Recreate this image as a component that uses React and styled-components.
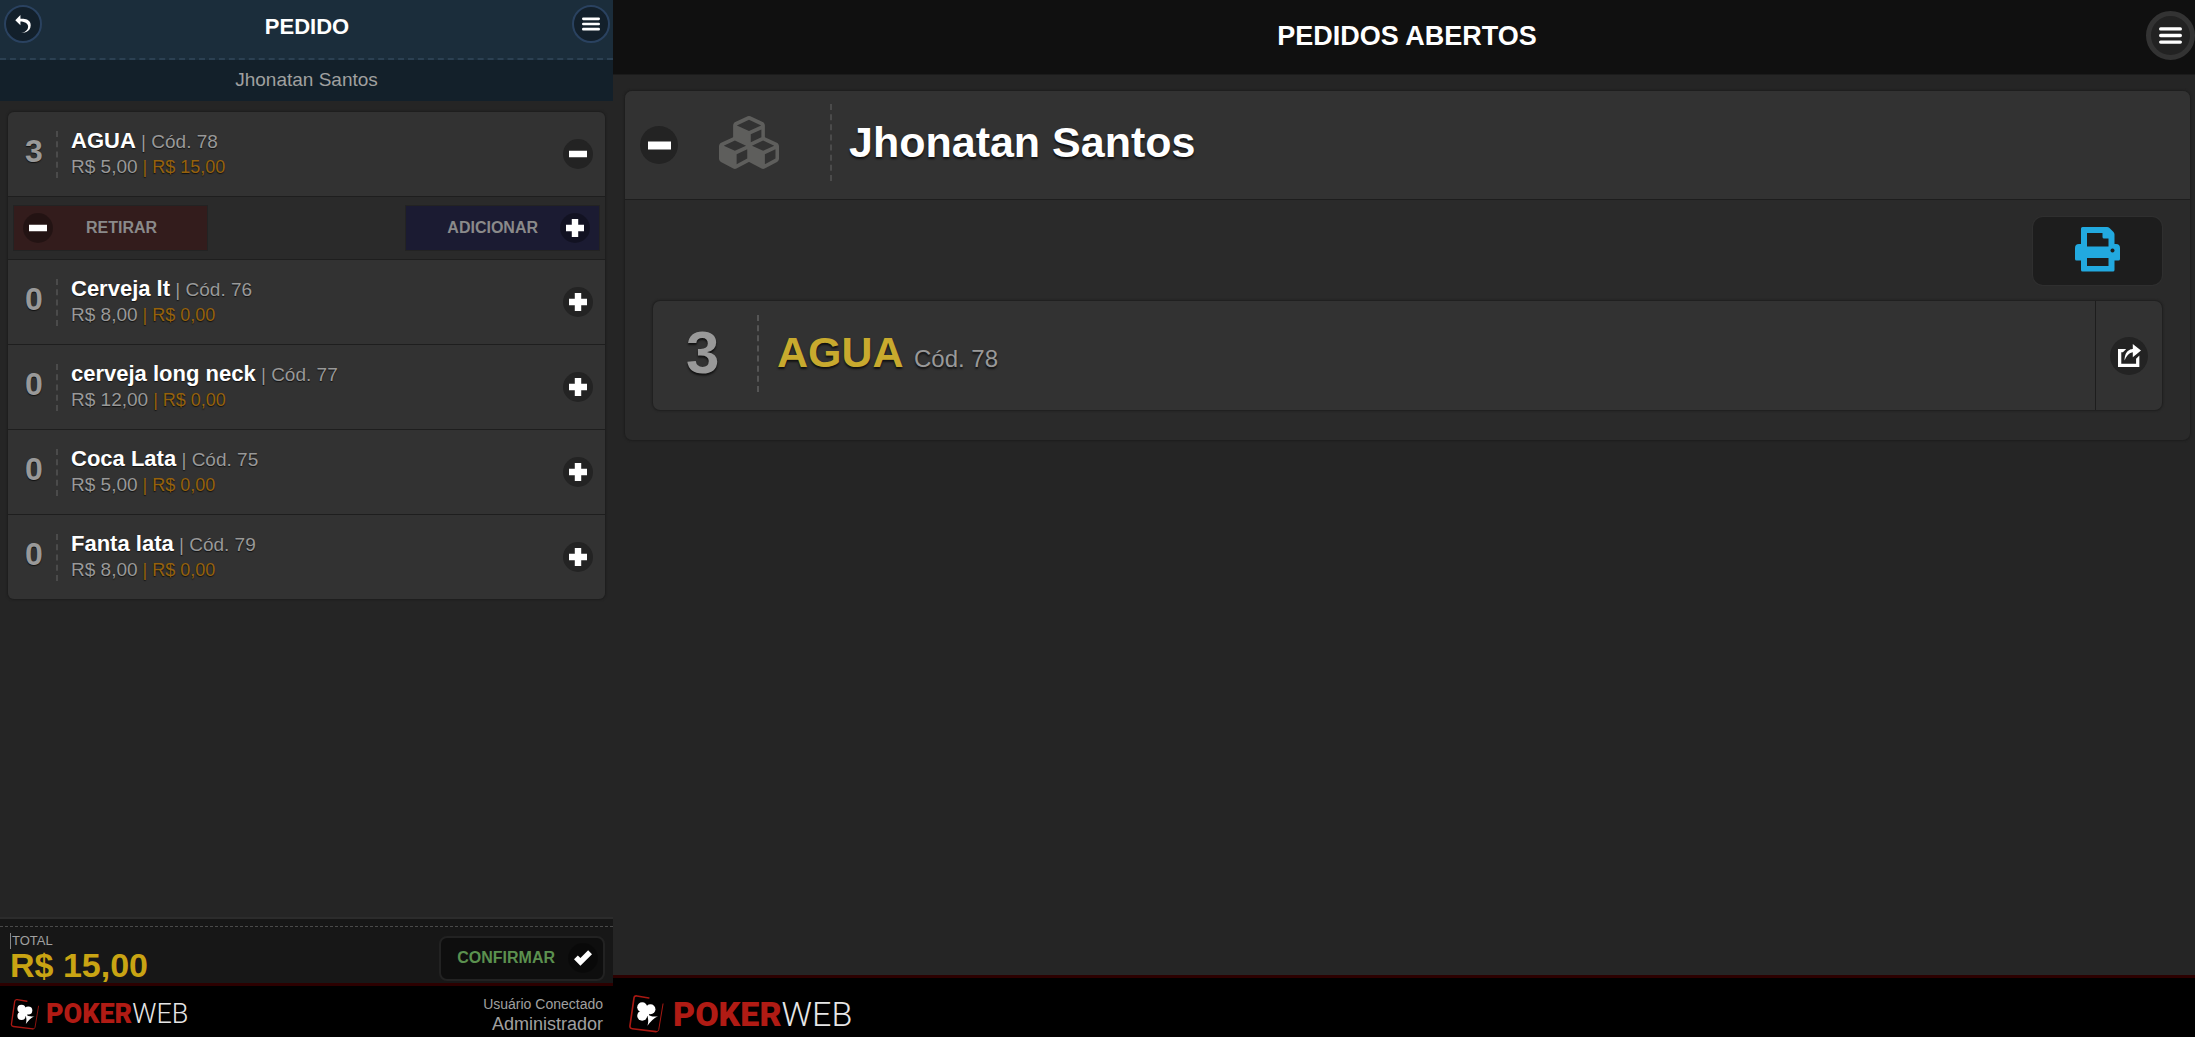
import React from "react";
import styled, { createGlobalStyle, css } from "styled-components";

const products = [
  { code: 78, name: "AGUA", qty: 3, price: "5,00", total: "15,00", open: true },
  { code: 76, name: "Cerveja lt", qty: 0, price: "8,00", total: "0,00" },
  { code: 77, name: "cerveja long neck", qty: 0, price: "12,00", total: "0,00" },
  { code: 75, name: "Coca Lata", qty: 0, price: "5,00", total: "0,00" },
  { code: 79, name: "Fanta lata", qty: 0, price: "8,00", total: "0,00" },
];

const icons = {
  plus: "M14 4.5H9.5V0h-5v4.5H0v5h4.5V14h5V9.5H14z",
  minus: "M0 4.5h14v5H0z",
  check: "M14 4l-3-3-5.997 5.997L3 5 0 8l4.966 5 .017-.018L5 13z",
  back: "M5 3V0L1 4l4 4V5s6 0 6 4-5 5-5 5 7 0 7-6-8-5-8-5z",
  bars: "M1 4h12a1 1 0 0 0 0-2H1a1 1 0 0 0 0 2zM13 6H1a1 1 0 0 0 0 2h12a1 1 0 0 0 0-2zM13 10H1a1 1 0 0 0 0 2h12a1 1 0 0 0 0-2z",
  action:
    "M9 5v3l5-4-5-4v3S4 3 4 10c2-5 5-5 5-5zM11 12H2V5h1l2-2H0v11h13V7l-2 2z",
};

function Icon({ name, size = 18 }) {
  return (
    <svg width={size} height={size} viewBox="0 0 14 14" aria-hidden="true">
      <path d={icons[name]} fill="#fff" />
    </svg>
  );
}

function CubesIcon() {
  return (
    <svg
      width="60"
      height="53"
      viewBox="0 0 2176 1792"
      preserveAspectRatio="none"
      aria-hidden="true"
    >
      <path
        fill="currentColor"
        fillRule="evenodd"
        d="M640 1632l384-192v-314l-384 164v342zm-64-454l404-173-404-173-404 173zm1088 454l384-192v-314l-384 164v342zm-64-454l404-173-404-173-404 173zm-448-293l384-165v-266l-384 164v267zm-64-379l441-189-441-189-441 189zm1088 518v416q0 36-19 67t-52 47l-448 224q-25 14-57 14t-57-14l-448-224q-4-2-7-4-2 2-7 4l-448 224q-25 14-57 14t-57-14l-448-224q-33-16-52-47t-19-67v-416q0-38 21.5-70t56.5-48l434-186v-400q0-38 21.5-70t56.5-48l448-192q23-10 50-10t50 10l448 192q35 16 56.5 48t21.5 70v400l434 186q36 16 57 48t21 70z"
      />
    </svg>
  );
}

function PrintIcon() {
  return (
    <svg width="45" height="45" viewBox="0 0 45 45" aria-hidden="true">
      <path
        fill="currentColor"
        fillRule="evenodd"
        d="M7.5 0H32q1.500 0 2.500 1l4 4q1 1 1 2.500V17H41q4 0 4 4v11q0 1.500-1.500 1.500h-4V43q0 1.500-1.500 1.500H7.500Q6 44.500 6 43v-9.500H1.500Q0 33.500 0 32V21q0-4 4-4h2V1.500Q6 0 7.500 0zM12 6v13.500h21.500v-8H29q-1.500 0-1.500-1.500V6zM12 31v8h21.500v-8zM37.500 21.500a2 2 0 1 0 .01 0z"
      />
    </svg>
  );
}

function Logo({ large }) {
  return (
    <Brand href="#" $large={large}>
      <svg viewBox="0 0 110 118" aria-hidden="true">
        <g fill="none" stroke="#a81812" strokeLinecap="round">
          <path
            strokeWidth="5"
            d="M62 12L26 6q-8-1-9 7L5 96q-1 8 7 9l72 9"
          />
          <path strokeWidth="3" d="M84 114q7 1 8-6l13-78" />
        </g>
        <g fill="#fff">
          <circle cx="42" cy="40" r="15" />
          <circle cx="67" cy="46" r="15" />
          <circle cx="42" cy="66" r="15" />
          <path d="M40 40l28 6-6 20-20 2z" />
          <path d="M54 58q16 14 36 9-18 8-32 29 6-20-4-38z" />
        </g>
      </svg>
      <span>
        <b>POKER</b>WEB
      </span>
    </Brand>
  );
}

function Product({ code, name, qty, price, total, open }) {
  return (
    <li>
      <ProductRow>
        <Qty>{qty}</Qty>
        <Info>
          <h2>
            {name}
            <small> | Cód. {code}</small>
          </h2>
          <p>
            R$ {price}
            <em> | R$ {total}</em>
          </p>
        </Info>
        <RoundButton aria-label={open ? "Fechar" : "Abrir"}>
          <Icon name={open ? "minus" : "plus"} />
        </RoundButton>
      </ProductRow>
      {open && (
        <Actions>
          <ActionButton $remove>
            <Round>
              <Icon name="minus" />
            </Round>
            <span>RETIRAR</span>
          </ActionButton>
          <ActionButton>
            <span>ADICIONAR</span>
            <Round>
              <Icon name="plus" />
            </Round>
          </ActionButton>
        </Actions>
      )}
    </li>
  );
}

function App() {
  return (
    <Page>
      <GlobalStyle />

      <Side>
        <SideHeader>
          <HeaderButton aria-label="Voltar">
            <Icon name="back" />
          </HeaderButton>
          <h1>PEDIDO</h1>
          <HeaderButton aria-label="Menu">
            <Icon name="bars" />
          </HeaderButton>
        </SideHeader>
        <Client>Jhonatan Santos</Client>

        <ProductList>
          {products.map((product) => (
            <Product key={product.code} {...product} />
          ))}
        </ProductList>

        <TotalBar>
          <TotalInner>
            <Total>
              <span>TOTAL</span>
              <strong>R$ 15,00</strong>
            </Total>
            <ConfirmButton>
              <span>CONFIRMAR</span>
              <Round>
                <Icon name="check" />
              </Round>
            </ConfirmButton>
          </TotalInner>
        </TotalBar>

        <SideFooter>
          <Logo />
          <User>
            <span>Usuário Conectado</span>
            <strong>Administrador</strong>
          </User>
        </SideFooter>
      </Side>

      <Main>
        <MainHeader>
          <h1>PEDIDOS ABERTOS</h1>
          <MenuButton aria-label="Menu">
            <Icon name="bars" size={23} />
          </MenuButton>
        </MainHeader>

        <Order>
          <OrderHeader>
            <RoundButton $large aria-label="Fechar pedido">
              <Icon name="minus" size={23} />
            </RoundButton>
            <CubesBox>
              <CubesIcon />
            </CubesBox>
            <h2>Jhonatan Santos</h2>
          </OrderHeader>
          <OrderBody>
            <PrintButton aria-label="Imprimir">
              <PrintIcon />
            </PrintButton>
            <OrderItem>
              <ItemQty>3</ItemQty>
              <ItemName>
                AGUA <small>Cód. 78</small>
              </ItemName>
              <ItemAction>
                <RoundButton $large aria-label="Transferir">
                  <Icon name="action" size={23} />
                </RoundButton>
              </ItemAction>
            </OrderItem>
          </OrderBody>
        </Order>

        <MainFooter>
          <Logo large />
        </MainFooter>
      </Main>
    </Page>
  );
}

export default App;

const GlobalStyle = createGlobalStyle`
  * {
    box-sizing: border-box;
    margin: 0;
    padding: 0;
  }
  body {
    background: #252525;
    color: #fff;
    font-family: "Liberation Sans", Arial, sans-serif;
  }
  button {
    font-family: inherit;
    border: none;
    cursor: pointer;
  }
  ul {
    list-style: none;
  }
`;

const Page = styled.div`
  display: grid;
  grid-template-columns: 613fr 1582fr;
  min-height: 100vh;
`;

const Side = styled.section`
  display: flex;
  flex-direction: column;
  min-width: 0;
`;

const SideHeader = styled.header`
  display: flex;
  justify-content: space-between;
  align-items: flex-start;
  height: 60px;
  padding: 5px 3px 0 4px;
  background: #1b2d3b;
  border-bottom: 2px dashed #2b4052;
  h1 {
    font-size: 22px;
    line-height: 44px;
  }
`;

const circle = css`
  display: flex;
  flex-shrink: 0;
  justify-content: center;
  align-items: center;
  border-radius: 50%;
`;

const HeaderButton = styled.button`
  ${circle}
  width: 38px;
  height: 38px;
  background: #13202b;
  border: 2px solid #2a4260;
`;

const Client = styled.p`
  height: 41px;
  background: #13202a;
  color: #a0a0a0;
  font-size: 19px;
  line-height: 39px;
  text-align: center;
`;

const ProductList = styled.ul`
  margin: 11px 8px auto;
  border-radius: 6px;
  box-shadow: 0 0 2px 1px #1d1d1d;
  overflow: hidden;
  li + li {
    border-top: 1px solid #1e1e1e;
  }
`;

const ProductRow = styled.div`
  display: flex;
  align-items: center;
  height: 84px;
  padding-right: 12px;
  background: #323232;
  text-shadow: 0 1px 1px #111;
`;

const Qty = styled.span`
  width: 50px;
  height: 47px;
  border-right: 2px dashed #4b4b4b;
  color: #999;
  font-size: 32px;
  font-weight: bold;
  line-height: 40px;
  padding-left: 17px;
`;

const Info = styled.div`
  flex: 1;
  padding-left: 13px;
  h2 {
    font-size: 22px;
    line-height: 25px;
  }
  small {
    color: #999;
    font-size: 19px;
    font-weight: normal;
  }
  p {
    color: #999;
    font-size: 19px;
    line-height: 25px;
  }
  em {
    color: #96620c;
    font-size: 18px;
    font-style: normal;
  }
`;

const Round = styled.span`
  ${circle}
  width: 30px;
  height: 30px;
  background: rgba(0, 0, 0, 0.3);
`;

const RoundButton = styled.button`
  ${circle}
  width: ${(props) => (props.$large ? "38px" : "30px")};
  height: ${(props) => (props.$large ? "38px" : "30px")};
  background: #232323;
`;

const Actions = styled.div`
  display: flex;
  justify-content: space-between;
  height: 63px;
  padding: 8px 5px;
  border-top: 1px solid #1e1e1e;
  background: #2a2a2a;
`;

const ActionButton = styled.button`
  display: flex;
  align-items: center;
  justify-content: ${(props) => (props.$remove ? "flex-start" : "flex-end")};
  gap: ${(props) => (props.$remove ? "33px" : "22px")};
  width: 195px;
  height: 46px;
  padding: 0 9px;
  background: ${(props) => (props.$remove ? "#331c1c" : "#1b1b32")};
  border: 1px solid #232323;
  color: #8a8a8a;
  font-size: 16px;
  font-weight: bold;
`;

const TotalBar = styled.div`
  padding-top: 7px;
  background: #171717;
  border-top: 2px solid #2c2c2c;
`;

const TotalInner = styled.div`
  display: flex;
  justify-content: space-between;
  align-items: flex-end;
  padding: 6px 8px 2px 10px;
  border-top: 1px dashed #4a4a4a;
`;

const Total = styled.div`
  display: flex;
  flex-direction: column;
  span {
    padding-left: 1px;
    border-left: 1px solid #888;
    color: #a0a0a0;
    font-size: 13px;
    line-height: 16px;
  }
  strong {
    color: #c9a413;
    font-size: 34px;
    line-height: 32px;
  }
`;

const ConfirmButton = styled.button`
  display: flex;
  align-items: center;
  gap: 13px;
  height: 45px;
  padding: 0 5px 2px 16px;
  background: #0e0e0e;
  border: 2px solid #222;
  border-radius: 8px;
  color: #5b914f;
  font-size: 16px;
  font-weight: bold;
`;

const SideFooter = styled.footer`
  display: flex;
  justify-content: space-between;
  align-items: center;
  height: 54px;
  padding: 4px 10px 0;
  background: #000;
  border-top: 3px solid #2c0000;
`;

const User = styled.div`
  display: flex;
  flex-direction: column;
  align-items: flex-end;
  color: #a0a0a0;
  line-height: 20px;
  span {
    font-size: 14px;
  }
  strong {
    font-size: 18px;
    font-weight: normal;
  }
`;

const Brand = styled.a`
  display: flex;
  align-items: center;
  gap: ${(props) => (props.$large ? "8px" : "6px")};
  color: #e6e6e6;
  font-family: Roboto, sans-serif;
  font-size: ${(props) => (props.$large ? "34px" : "27px")};
  font-weight: 300;
  text-decoration: none;
  svg {
    width: ${(props) => (props.$large ? "37px" : "30px")};
    height: ${(props) => (props.$large ? "39px" : "32px")};
  }
  b {
    color: #b01b14;
    font-weight: 900;
  }
`;

const Main = styled.main`
  display: flex;
  flex-direction: column;
  min-width: 0;
`;

const MainHeader = styled.header`
  display: grid;
  grid-template-columns: 1fr auto 1fr;
  align-items: center;
  height: 75px;
  padding: 0 0 4px 6px;
  background: #101010;
  border-bottom: 1px solid #1b1b1b;
  h1 {
    grid-column: 2;
    padding-top: 2px;
    font-size: 27px;
  }
`;

const MenuButton = styled.button`
  ${circle}
  justify-self: end;
  width: 49px;
  height: 49px;
  background: #222;
  border: 5px solid #333;
`;

const Order = styled.article`
  margin: 16px 5px auto 12px;
  background: #2a2a2a;
  border-radius: 7px;
  box-shadow: 0 0 2px 1px #1d1d1d;
  overflow: hidden;
`;

const OrderHeader = styled.div`
  display: flex;
  align-items: center;
  height: 109px;
  padding-left: 15px;
  background: #323232;
  border-bottom: 1px solid #1d1d1d;
  text-shadow: 0 2px 2px #111;
  h2 {
    padding: 0 0 5px 17px;
    font-size: 43px;
  }
`;

const CubesBox = styled.div`
  display: flex;
  align-items: center;
  width: 154px;
  height: 77px;
  margin-bottom: 5px;
  padding-left: 41px;
  border-right: 2px dashed #4b4b4b;
  color: #5e5e5c;
`;

const OrderBody = styled.div`
  display: flex;
  flex-direction: column;
  gap: 16px;
  padding: 17px 28px 30px;
`;

const PrintButton = styled.button`
  display: flex;
  align-self: flex-end;
  justify-content: center;
  width: 129px;
  height: 68px;
  padding-top: 10px;
  background: #1d1d1d;
  border-radius: 10px;
  box-shadow: 0 0 0 1px #2f2f2f;
  color: #22a9df;
`;

const OrderItem = styled.div`
  display: flex;
  align-items: center;
  height: 109px;
  background: #323232;
  border-radius: 7px;
  box-shadow: 0 0 2px 1px #1d1d1d;
  text-shadow: 0 2px 2px #111;
`;

const ItemQty = styled.span`
  width: 106px;
  height: 77px;
  margin-bottom: 5px;
  padding-left: 33px;
  border-right: 2px dashed #555;
  color: #999;
  font-size: 60px;
  font-weight: bold;
  line-height: 75px;
`;

const ItemName = styled.h3`
  flex: 1;
  padding: 0 0 6px 18px;
  color: #c8aa2e;
  font-size: 43px;
  small {
    color: #999;
    font-size: 24px;
    font-weight: normal;
  }
`;

const ItemAction = styled.div`
  display: flex;
  justify-content: center;
  align-items: center;
  width: 67px;
  height: 100%;
  border-left: 1px solid #1d1d1d;
`;

const MainFooter = styled.footer`
  display: flex;
  align-items: center;
  height: 62px;
  padding: 12px 15px 0;
  background: #000;
  border-top: 3px solid #2c0000;
`;
